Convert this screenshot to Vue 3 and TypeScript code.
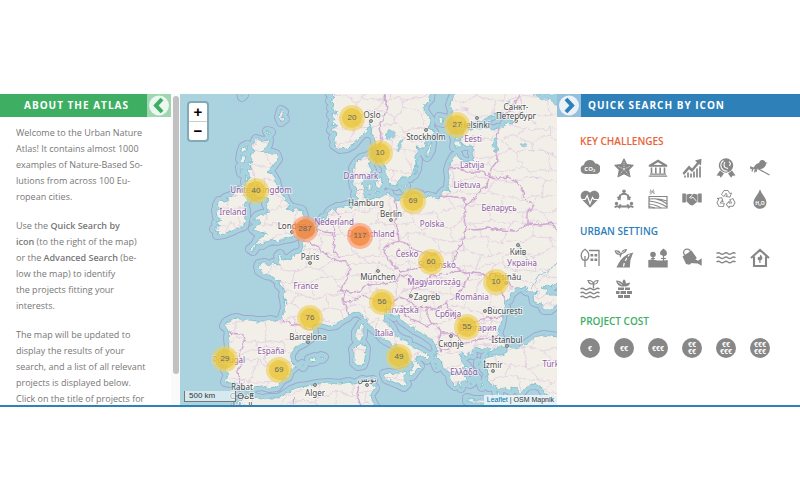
<script setup lang="ts">
interface Marker { n: number; x: number; y: number; hot?: boolean }
interface Label { t: string; x: number; y: number; city?: boolean }

const VIEW = { x: 180, y: 94, w: 377, h: 311 }

const markers: Marker[] = [
  { n: 20, x: 352, y: 118 }, { n: 27, x: 457, y: 125 }, { n: 10, x: 380, y: 153 },
  { n: 40, x: 256, y: 191 }, { n: 69, x: 413, y: 201 }, { n: 287, x: 305, y: 229, hot: true },
  { n: 117, x: 360, y: 236, hot: true }, { n: 60, x: 431, y: 262 }, { n: 10, x: 496, y: 282 },
  { n: 56, x: 382, y: 302 }, { n: 76, x: 310, y: 318 }, { n: 55, x: 467, y: 327 },
  { n: 29, x: 225, y: 359 }, { n: 69, x: 279, y: 370 }, { n: 49, x: 399, y: 357 },
]

const place = (m: Marker) => ({
  left: `${((m.x - VIEW.x) / VIEW.w) * 100}%`,
  top: `${((m.y - VIEW.y) / VIEW.h) * 100}%`,
})

const labels: Label[] = [
  { t: 'Danmark', x: 361, y: 179 }, { t: 'Eesti', x: 473, y: 142 }, { t: 'Latvija', x: 472, y: 168 },
  { t: 'Lietuva', x: 467, y: 188 }, { t: 'Беларусь', x: 499, y: 211 }, { t: 'Nederland', x: 334, y: 225 },
  { t: 'Deutschland', x: 371, y: 237 }, { t: 'Polska', x: 432, y: 227 }, { t: 'Ireland', x: 233, y: 215 },
  { t: 'United Kingdom', x: 261, y: 193 }, { t: 'France', x: 306, y: 289 }, { t: 'Česko', x: 407, y: 257 },
  { t: 'Slovensko', x: 437, y: 268 }, { t: 'Magyarország', x: 434, y: 285 }, { t: 'Hrvatska', x: 402, y: 313 },
  { t: 'Italia', x: 384, y: 336 }, { t: 'España', x: 271, y: 354 }, { t: 'Portugal', x: 229, y: 363 },
  { t: 'România', x: 472, y: 300 }, { t: 'Србија', x: 448, y: 317 }, { t: 'България', x: 478, y: 331 },
  { t: 'Ελλάδα', x: 464, y: 375 }, { t: 'Україна', x: 522, y: 266 }, { t: 'Türkiye', x: 556, y: 367 },
  { t: 'Oslo', x: 372, y: 118, city: true }, { t: 'Stockholm', x: 426, y: 140, city: true },
  { t: 'Helsinki', x: 475, y: 128, city: true }, { t: 'Санкт-', x: 516, y: 110, city: true },
  { t: 'Петербург', x: 516, y: 119, city: true }, { t: 'Hamburg', x: 366, y: 206, city: true },
  { t: 'Berlin', x: 391, y: 217, city: true }, { t: 'London', x: 292, y: 229, city: true },
  { t: 'Paris', x: 310, y: 260, city: true }, { t: 'München', x: 378, y: 280, city: true },
  { t: 'Zagreb', x: 427, y: 300, city: true }, { t: 'Barcelona', x: 308, y: 340, city: true },
  { t: 'Rabat', x: 242, y: 390, city: true }, { t: 'ⵔⴱⴰⵟ', x: 242, y: 399, city: true },
  { t: 'الرباط', x: 242, y: 408, city: true }, { t: 'Alger', x: 315, y: 396, city: true },
  { t: 'تونس', x: 367, y: 382, city: true }, { t: 'București', x: 505, y: 314, city: true },
  { t: 'Скопје', x: 451, y: 347, city: true }, { t: 'İstanbul', x: 507, y: 343, city: true },
  { t: 'İzmir', x: 493, y: 368, city: true }, { t: 'Київ', x: 518, y: 255, city: true },
  { t: 'Chișinău', x: 505, y: 280, city: true },
]

const dots: number[][] = [
  [371, 121], [426, 130], [477, 118], [516, 121], [391, 220], [292, 232], [310, 263], [378, 271],
  [411, 296], [308, 342], [315, 385], [367, 385], [485, 311], [451, 336], [507, 346], [493, 371], [518, 245], [506, 283],
]

const mainland =
  'M456 85L455 94 452 99 450 105 452 111 451 117 456 124 460 128 464 125 467 127 470 123 477 122 484 120 490 117 497 114 503 114 506 118 513 120 511 124 505 123 503 128 498 128 493 130 487 127 480 129 473 128 467 130 462 132 463 136 460 139 462 144 466 146 470 145 473 147 472 153 474 158 470 162 465 162 460 159 458 154 454 156 450 163 448 170 449 178 448 187 450 192 444 191 441 194 439 199 432 197 428 196 425 199 421 195 415 193 408 197 401 199 396 200 391 197 389 193 384 195 379 198 374 197 370 200 365 197 363 192 365 188 361 185 364 180 364 175 370 175 372 170 369 166 371 162 369 158 374 152 368 156 361 158 356 163 353 168 354 174 353 181 354 187 357 190 355 195 358 199 356 202 359 207 353 204 350 208 347 205 341 207 337 207 335 212 333 209 329 212 325 220 323 218 320 225 316 227 318 230 313 233 307 237 303 241 304 247 301 252 295 254 291 257 293 260 287 259 283 260 280 254 278 256 280 265 273 263 270 266 265 263 259 264 258 267 261 269 259 271 266 275 272 276 277 280 281 281 279 285 284 290 283 296 288 303 284 299 285 308 282 318 278 322 271 320 265 321 257 321 250 320 243 320 237 318 232 319 226 322 224 326 229 330 228 338 229 347 227 355 224 360 227 365 225 370 228 374 225 382 230 383 235 383 240 386 245 390 249 392 255 387 262 386 269 388 277 387 282 380 288 377 290 371 296 366 291 361 291 354 296 347 304 343 312 337 314 332 312 327 316 323 322 324 329 326 336 325 342 320 348 317 350 314 357 312 363 315 367 321 371 327 377 332 383 339 390 343 396 346 400 350 405 353 409 358 414 364 411 369 409 376 412 376 417 369 420 366 415 361 417 356 424 357 427 360 429 356 422 351 414 347 407 345 408 341 401 339 395 334 392 327 384 320 385 314 384 309 389 308 390 314 394 317 398 314 402 321 408 325 415 330 423 334 430 339 434 342 437 350 436 356 440 360 443 367 447 372 455 371 461 373 456 374 450 375 451 382 455 386 458 382 461 388 463 380 467 383 465 376 461 371 466 373 463 368 466 367 462 361 459 354 463 351 464 357 468 355 468 352 473 355 471 350 475 347 481 349 488 347 492 349 487 355 491 353 494 350 500 346 507 348 507 353 500 355 493 355 485 357 485 363 489 368 485 369 488 374 486 379 491 384 489 387 497 385 498 389 505 388 511 391 511 387 517 389 521 393 526 387 533 384 541 387 545 394 551 397 558 396 600 398L600 85Z' +
  'M507 346L501 340 498 333 501 325 502 319 503 312 506 307 504 302 509 300 511 294 517 289 524 286 529 288 526 291 533 293 537 292 533 297 534 302 541 304 544 310 550 310 555 306 560 305 590 300 590 341 558 337 551 336 543 335 536 337 529 342 522 346 514 348Z' +
  'M546 295L548 290 542 288 547 285 552 287 557 282 590 279 590 295 555 295Z'

const islands = [
  'M329 85L330 94 334 98 330 101 335 106 331 108 337 113 331 115 335 120 332 124 338 126 331 130 337 133 333 138 336 142 334 145 340 149 347 148 353 145 359 138 364 132 367 133 369 127 370 121 371 127 370 133 374 136 375 142 377 150 380 155 381 162 386 167 386 174 389 178 388 184 396 186 398 181 402 178 410 178 413 171 416 164 415 156 419 151 416 147 423 148 426 143 425 139 430 137 434 132 430 128 425 130 430 125 431 120 427 115 424 110 425 104 430 99 432 85Z',
  'M256 139L263 141 269 140 268 145 262 151 269 152 276 154 278 159 273 166 270 170 266 172 272 174 276 181 278 189 284 196 287 203 290 206 287 209 292 211 294 208 302 210 304 216 301 222 296 225 300 228 302 231 296 236 291 238 284 239 277 241 272 240 267 242 262 245 258 244 253 251 250 249 255 245 258 239 263 235 268 234 265 232 258 233 253 229 259 225 260 220 254 220 257 216 262 214 268 214 268 208 266 204 268 199 264 196 260 198 254 196 257 191 259 185 255 187 252 182 255 179 250 184 248 190 246 185 250 176 247 171 252 168 248 164 253 161 250 155 255 152 252 147Z',
  'M231 196L236 192 241 190 245 194 247 200 244 205 246 210 246 217 244 226 238 228 232 231 224 234 217 235 219 231 214 229 220 226 216 223 222 220 217 217 216 210 222 209 217 205 219 201 226 202 229 199 225 198Z',
  'M243 147L247 145 245 151 241 153ZM241 155L246 157 244 163 240 159ZM240 167L244 169 241 173ZM246 176L248 179 245 182ZM267 131L271 132 269 135ZM281 110L284 112 282 116 285 119 281 122 279 117ZM241 92L244 95 242 97Z',
  'M367 184L371 184 371 190 367 190ZM375 181L381 177 383 183 380 189 376 187ZM375 191L380 192 376 194ZM402 185L406 186 405 189ZM428 146L432 143 431 150 427 157 425 154ZM418 160L417 169 414 175ZM439 117L444 118 443 123 439 122ZM455 142L461 142 461 147 454 147ZM454 137L458 138 456 141Z',
  'M361 324L363 326 363 335 360 342 356 339 356 332ZM357 345L363 343 366 348 365 359 363 365 358 366 354 363 354 355 353 349Z',
  'M384 374L389 373 396 374 406 371 404 379 407 384 404 387 398 384 391 381 386 379ZM309 359L315 357 316 361 311 362ZM321 356L324 357 322 359ZM302 364L304 365 303 367Z',
  'M467 398L474 400 484 400 485 403 475 403 467 401ZM463 363L467 366 470 371 466 370ZM475 376L477 378 475 380ZM483 365L487 367 484 369ZM478 362L480 363 478 365ZM481 384L484 385 482 387ZM435 363L438 365 437 368ZM496 390L499 394 497 397ZM470 381L472 383 470 384ZM434 354L436 357 434 359Z',
  'M230 415L236 406 242 400 247 394 254 397 262 399 270 398 278 398 284 395 291 390 299 387 308 386 317 384 328 383 340 384 349 382 355 384 362 380 367 381 373 380 371 385 375 388 370 395 372 401 377 410Z',
]
const land = mainland + islands.join('')

const countryBorders =
  'M378 148L382 138 379 128 383 118 388 108 384 98 386 90M354 190L363 190M228 333L240 334 246 338 242 345 240 354 242 363 237 372 240 383M282 320L292 324 300 325 309 330 314 329M348 316L346 308 343 300 346 291 340 291 347 279 350 270 347 262 339 261 331 258 322 251 312 243 304 240M317 229L325 232 332 233 335 241 333 249 340 258M336 210L340 217 334 225 335 236M346 291L352 292 360 291 366 286 374 284 382 284 390 282 397 281 401 272 395 267 388 259 383 250 389 244 399 241 407 244 413 249 421 253 430 253 438 255M401 272L409 270 416 268 423 265 427 258M399 241L398 230 395 221 397 210 395 199M346 291L342 300 351 302 357 299 365 296 373 300 384 301 392 303 398 297 407 299 413 289 414 280 407 275 401 276M413 289L423 285 430 276 440 275 450 272 461 271M407 299L416 308 427 307 437 310 446 302 455 298 464 286 470 273 461 271 453 263 457 251 463 240 466 229 464 217 466 205 464 198 448 196 437 198M448 169L458 168 469 172 482 172 489 177 491 169 498 160 495 151 497 138 499 128M489 177L487 186 478 192 475 199 466 205M489 177L501 178 508 177 517 182 522 190 526 199 533 205 527 213 527 224 515 231 501 230 487 228 477 230 466 229M527 224L541 225 552 223 557 230M470 273L484 274 490 272 500 276 507 280 513 288M484 274L494 284 501 291 505 301M446 302L449 309 456 316 463 321 475 322 487 318 503 317M463 321L460 330 457 336 463 344 475 340 487 338 492 341 498 335M403 305L403 313 411 319 421 322 427 328 432 323 438 325 441 333 438 343 441 351M427 307L427 315 431 323M441 333L450 333 457 336M441 351L449 348 463 344M294 398L291 410M360 383L357 394 361 407M505 115L515 103 522 92'

/* Repeatable noise, so that the district web is drawn the same on each load. */
const noise = (a: number, b: number) => {
  const s = Math.sin(a * 127.1 + b * 311.7) * 43758.5453
  return s - Math.floor(s) - 0.5
}

/* A jittered honeycomb of district lines, clipped to the land. */
function districtWeb(step: number): string {
  const point = (i: number, j: number): [number, number] => [
    170 + i * step + noise(i, j) * step * 0.8,
    84 + j * step + noise(j + 50, i + 9) * step * 0.8,
  ]
  const link = (a: [number, number], b: [number, number], k: number) => {
    const mx = (a[0] + b[0]) / 2 + noise(k, a[0]) * 4
    const my = (a[1] + b[1]) / 2 + noise(a[1], k) * 4
    return `M${a[0].toFixed(1)} ${a[1].toFixed(1)}L${mx.toFixed(1)} ${my.toFixed(1)} ${b[0].toFixed(1)} ${b[1].toFixed(1)}`
  }
  let d = ''
  for (let i = 0; i * step < 400; i++) {
    for (let j = 0; j * step < 330; j++) {
      d += link(point(i, j), point(i + 1, j), i + j)
      if ((i + j) % 2 === 0) d += link(point(i, j), point(i, j + 1), i - j)
    }
  }
  return d
}
const web = districtWeb(14)

interface Icon { name: string; svg: string }
const recycleArrow = 'M5.500 5.500L8 1.500h4l2 3.200 1.500-.8-1.500 4.300-4.300-.9L11.300 6.400 10 4.200 8 7.600z'
const challenges: Icon[] = [
  { name: 'Climate action', svg: '<path d="M5 16a4.700 4.700 0 0 1-1-9.200 6 6 0 0 1 11.300-1.300A5.200 5.200 0 0 1 15.500 16z"/><text x="9.800" y="13" font-size="6" font-weight="700" fill="#fff" text-anchor="middle">CO₂</text>' },
  { name: 'Coastal resilience', svg: '<path d="M10 .8l2.800 5.700 6.600.8-4.700 4.600 1.400 7L10 15.800 3.900 18.900l1.400-7L.6 7.300l6.600-.8z" stroke="currentColor" stroke-width="1" stroke-linejoin="round"/><path d="M10 4v7M10 11L4 8.500M10 11l6-2.500M10 11l-4 5.500M10 11l4 5.500" stroke="#fff" stroke-width=".7" stroke-dasharray="1 1"/>' },
  { name: 'Cultural heritage', svg: '<path d="M10 1.500L.8 7v1.700h18.400V7zM10 4.200L14.500 7h-9z" fill-rule="evenodd"/><path d="M3.500 9.500v6M7.800 9.500v6M12.200 9.500v6M16.500 9.500v6" stroke="currentColor" stroke-width="1.600"/><path d="M2 15.500h16v1.300H2zM.8 17.500h18.400v1.300H.8z"/>' },
  { name: 'Economic development', svg: '<path d="M.5 15l6.500-7.500 3 3 5-6-2-2L19.500.8 19 7.500l-2-1.500-7 8-3-2.800L2 17z"/><path d="M3 17.500v2M6 14.500v5M9 15.500v4M12 13.500v6M15 10.500v9M18 8.500v11" stroke="currentColor" stroke-width="1.700"/>' },
  { name: 'Environmental quality', svg: '<circle cx="10" cy="7.500" r="7.200"/><path d="M7.500 2.500q-4 3-2 7.500 2 3.500 6 3M9 4q-2 3 0 5.500l3 1M13 3.500l1.500 2-1 2.500" stroke="#fff" stroke-width="1.100" fill="none"/><path d="M4 12.500L.5 17.500l3 .2 1.300 2L8 15.500zM16 12.500l3.500 5-3 .2-1.300 2L12 15.500z"/>' },
  { name: 'Biodiversity', svg: '<path d="M18 5l-2.500-.8Q14.500 1.500 11.500 2q-2 .5-2.500 3-5 1-5.500 6.500l4-1q4 2 7.500-2 1.300-1.500 1-3z"/><path d="M.5 9.500l8 1.500L19.500 17M3 10L2 13.500M6 10.500l-1.500 4" fill="none" stroke="currentColor" stroke-width="1.200"/><path d="M0 8l4 2-3.500 1.500zM4 12.500l3-1.500v3z"/>' },
  { name: 'Health and well-being', svg: '<path d="M10 18.800L2 10.500C-2 5.500 4-1.500 10 3.700 16-1.500 22 5.500 18 10.500z"/><path d="M.5 10.500h4.700l2-3.700 2.800 7.700 2.500-6 1.500 2h5.500" fill="none" stroke="#fff" stroke-width="1.200"/>' },
  { name: 'Inclusive communities', svg: '<circle cx="10" cy="2.300" r="1.800"/><circle cx="2.500" cy="14.500" r="1.700"/><circle cx="17.500" cy="14.500" r="1.700"/><path d="M7 5.800q3-2 6 0M6.500 5.500L4.200 11M13.500 5.500L15.800 11M6.500 17.500h7M.8 18.500q2-2.500 4.700-.2l1-3M19.200 18.500q-2-2.500-4.700-.2l-1-3" fill="none" stroke="currentColor" stroke-width="1.900"/><path d="M2.500 8l4 3.500.5-4.500zM17.500 8l-4 3.500-.5-4.500z"/>' },
  { name: 'Green space', svg: '<path d="M1 7.500h18v11.500H1z" fill="none" stroke="currentColor" stroke-width="1.200"/><path d="M1 10q9-1 18 2M1 12q10 1 18 6M1 15q8 1 12 4M8 10q6 1 11 5M1 17.500l6 1.500" fill="none" stroke="currentColor" stroke-width="1.200"/><path d="M2 .8l1.500 1.200M5.500.5l-1 2M3.500 4L2 5.500M5 3.500L6.500 5M1.500 3h5" stroke="currentColor" stroke-width="1"/>' },
  { name: 'Participatory planning', svg: '<path d="M.3 4.500h3.600v9H.3zM16.100 4.500h3.600v9h-3.600zM4.400 5.500l4-.8 1.600.8 2-.8 3.600.8v7l-5 4-2.600-.8-3.600-3.500z"/><path d="M10.500 6L7.500 8.500q1.500 1.500 3.500-.3l3.500 4" fill="none" stroke="#fff" stroke-width=".9"/>' },
  { name: 'Sustainable production', svg: `<g fill="none" stroke="currentColor" stroke-width=".9" stroke-linejoin="round"><path d="${recycleArrow}"/><path d="${recycleArrow}" transform="rotate(120 10 10.800)"/><path d="${recycleArrow}" transform="rotate(240 10 10.800)"/></g>` },
  { name: 'Water management', svg: '<path d="M10 .3q1.300 3.700 4.200 7.500c5.600 8-.4 12-4.200 12s-9.800-4-4.200-12Q8.700 4 10 .3z"/><text x="10" y="15.500" font-size="5" font-weight="700" fill="#fff" text-anchor="middle">H₂O</text>' },
]
const wave = 'q2-1.500 3.800 0t3.800 0 3.800 0 3.800 0 3.800 0'
const settings: Icon[] = [
  { name: 'Building areas', svg: '<path d="M5 1.200q4.300 2.800 3.700 7.200-.5 4-3.700 4T1.300 8.400Q.7 4 5 1.200z" fill="none" stroke="currentColor" stroke-width="1.300"/><path d="M5 8v11M9 2.500h10V18" fill="none" stroke="currentColor" stroke-width="1.300"/><path d="M10.500 6h2.700v2.500h-2.700zM14.500 6h2.700v2.500h-2.700zM10.500 10.500h2.700V13h-2.700zM14.500 10.500h2.700V13h-2.700z"/>' },
  { name: 'Green street', svg: '<path d="M2.500 19.500Q6 10.500 14 6l5.500-1.500Q15.500 11 16 19.500z"/><path d="M9.500 18.500l.8-3.500M11.300 13l1.500-3M14 8.500l1.500-2" stroke="#fff" stroke-width="1.200"/><path d="M.5 2.500q5-1 6.500 3l1.500-3q2-2 4.500-1.500Q12.500 5 8 6l-2 4-.5-3Q1.500 7 .5 2.500z"/><path d="M2 3.500l4 2.500M8 5l3-2.500" stroke="#fff" stroke-width=".7"/>' },
  { name: 'Parks', svg: '<path d="M.3 12q3-1 7 0t12.400 0v7.500H.3z"/><circle cx="5" cy="6.500" r="2.800"/><path d="M15.500.5q4.500 3 3.200 6t-6.400 0Q11 3.500 15.500.5z"/><path d="M5 7v6M15.500 7v6" stroke="currentColor" stroke-width="1.300"/><path d="M3 10h4v1H3zM13 10h5v1h-5z"/>' },
  { name: 'Allotments', svg: '<circle cx="5" cy="4.500" r="3.400" fill="none" stroke="currentColor" stroke-width="1.300"/><path d="M.5 8.500L9.500 2.500l5.300 7.500-7.300 6.800-3.500-.8z"/><path d="M10 9.500l6 3.300 3.700-2.500v7.400l-4-2.200L8 15z"/>' },
  { name: 'Rivers and lakes', svg: `<path d="M.5 5.500${wave}M.5 9.800${wave}M.5 14${wave}" fill="none" stroke="currentColor" stroke-width="1.400"/>` },
  { name: 'Indoor green', svg: '<path d="M1 10L10 2l9 8M4 8.500v9.500h12V8.500" fill="none" stroke="currentColor" stroke-width="2.100"/><path d="M10.300 6.500q3 2.500 1.700 5l-1.500 1v2.500H9.300v-2.500q-2.500-1-1.300-3.500l1.500.3z"/>' },
  { name: 'Blue and green corridors', svg: `<path d="M.5 10${wave}M.5 14${wave}M.5 18${wave}M13.500 9.500V4" fill="none" stroke="currentColor" stroke-width="1.400"/><path d="M8 1.500q4.500-.5 5.500 3.500Q9 5.500 8 1.500zM13.500 5q0-3.500 4.500-3.500-.5 4-4.500 3.500z" fill="none" stroke="currentColor" stroke-width="1.100"/>` },
  { name: 'Green walls', svg: '<path d="M4 8.500h6V11H4zM11 8.500h5V11h-5zM2 12h3.500v3H2zM6.500 12h5.500v3H6.500zM13 12h5v3h-5zM4 16h5v3H4zM10 16h6v3h-6z"/><path d="M2 1.500q5 0 6.500 3Q8 1.500 10 .3q2.500 2 2 4.200l4-1q0 3.500-4.500 4H8Q3 7 2 1.500z"/><path d="M4 3l4 3" stroke="#fff" stroke-width=".7"/>' },
]
const costs: string[][] = [['€'], ['€€'], ['€€€'], ['€€', '€€'], ['€€', '€€€'], ['€€€', '€€€']]
const sections = [
  { title: 'KEY CHALLENGES', tone: 'orange', icons: challenges },
  { title: 'URBAN SETTING', tone: 'blue', icons: settings },
]
</script>

<template>
  <div class="page">
    <main class="atlas">
      <section class="about">
        <div class="about-body">
          <header class="bar bar-green">
            <h2>ABOUT THE ATLAS</h2>
            <button class="toggle" aria-label="Hide the about panel">
              <svg viewBox="0 0 24 23"><circle cx="12" cy="11.500" r="10" /><path d="M15 5L9 11.500 15 18" /></svg>
            </button>
          </header>
          <div class="copy">
            <p>Welcome to the Urban Nature<br>Atlas! It contains almost 1000<br>examples of Nature-Based So-<br>lutions from across 100 Eu-<br>ropean cities.</p>
            <p>Use the <b>Quick Search by<br>icon</b> (to the right of the map)<br>or the <b>Advanced Search</b> (be-<br>low the map) to identify<br>the projects fitting your<br>interests.</p>
            <p>The map will be updated to<br>display the results of your<br>search, and a list of all relevant<br>projects is displayed below.<br>Click on the title of projects for</p>
          </div>
        </div>
        <div class="track"><div class="thumb"></div></div>
      </section>

      <section class="map" aria-label="Map of projects">
        <svg class="world" :viewBox="`${VIEW.x} ${VIEW.y} ${VIEW.w} ${VIEW.h}`" preserveAspectRatio="xMidYMid slice">
          <defs>
            <clipPath id="land-clip"><path :d="land" clip-rule="evenodd" /></clipPath>
            <filter id="coast-detail" filterUnits="userSpaceOnUse" x="160" y="74" width="420" height="350">
              <feTurbulence type="fractalNoise" baseFrequency="0.2" numOctaves="2" seed="4" />
              <feDisplacementMap in="SourceGraphic" scale="5" xChannelSelector="R" yChannelSelector="G" />
            </filter>
          </defs>
          <rect x="0" y="0" width="900" height="600" class="sea" />
          <path :d="land" class="limit" />
          <path :d="land" class="shelf" />
          <g filter="url(#coast-detail)">
            <path :d="land" class="land" fill-rule="evenodd" />
            <g clip-path="url(#land-clip)">
              <path :d="web" class="web" />
              <path :d="countryBorders" class="border" />
            </g>
            <path class="lake" d="M386 134L390 129 394 131 395 136 390 140 387 138ZM397 145L403 139 402 145 398 152ZM494 137L498 139 496 144 499 150 496 152 493 146ZM521 144L525 143 527 146 523 147ZM534 94L542 100 550 98 553 104 558 106 558 94ZM507 104L509 100 510 105Z" />
            <path class="river" d="M557 263L548 271 540 274 531 288M519 245L522 254 530 261M488 311L500 309" />
          </g>
          <g class="place-dots">
            <circle v-for="(d, i) in dots" :key="i" :cx="d[0]" :cy="d[1]" r="1.500" />
          </g>
          <text v-for="l in labels" :key="l.t" :x="l.x" :y="l.y" :class="l.city ? 'city' : 'country'">{{ l.t }}</text>
        </svg>
        <button v-for="(m, i) in markers" :key="i" class="marker" :class="{ hot: m.hot }" :style="place(m)"><span>{{ m.n }}</span></button>
        <div class="zoom">
          <button aria-label="Zoom in">+</button>
          <button aria-label="Zoom out">−</button>
        </div>
        <div class="scale">500 km</div>
        <div class="credit"><a href="#">Leaflet</a> | OSM Mapnik</div>
      </section>

      <section class="search">
        <header class="bar bar-blue">
          <button class="toggle" aria-label="Hide the search panel">
            <svg viewBox="0 0 24 23"><circle cx="12" cy="11.500" r="10" /><path d="M9 5L15 11.500 9 18" /></svg>
          </button>
          <h2>QUICK SEARCH BY ICON</h2>
        </header>
        <div class="groups">
          <div v-for="s in sections" :key="s.title" class="group">
            <h3 :class="s.tone">{{ s.title }}</h3>
            <div class="icons">
              <button v-for="ic in s.icons" :key="ic.name" :aria-label="ic.name">
                <svg viewBox="0 0 20 20" v-html="ic.svg"></svg>
              </button>
            </div>
          </div>
          <div class="group">
            <h3 class="green">PROJECT COST</h3>
            <div class="icons">
              <button v-for="(c, i) in costs" :key="i" class="cost">
                <span v-for="(row, r) in c" :key="r">{{ row }}</span>
              </button>
            </div>
          </div>
        </div>
      </section>
    </main>
  </div>
</template>

<style>
body { background: #fff; }
</style>

<style scoped>
.page {
  box-sizing: border-box;
  height: 100vh;
  padding: 94px 0 93px;
  font-family: "Open Sans", "Noto Sans", sans-serif;
  color: #777;
}
.atlas {
  box-sizing: border-box;
  height: 100%;
  display: grid;
  grid-template-columns: 180px minmax(0, 1fr) 243px;
  grid-template-rows: minmax(0, 1fr);
  border-bottom: 2px solid #2e80b9;
}
button { padding: 0; margin: 0; border: 0; background: none; font: inherit; color: inherit; cursor: pointer; }
h2, h3, p { margin: 0; }

.about { display: flex; min-height: 0; overflow: hidden; }
.about-body { flex: 1; overflow: hidden; }
.track { width: 9px; box-sizing: border-box; padding: 2px 2px 0; background: #fafafa; }
.thumb { width: 6px; height: 90%; border-radius: 3px; background: #c1c1c1; }

.bar { display: flex; height: 23px; align-items: center; color: #fff; }
.bar h2 { font-size: 10px; line-height: 23px; font-weight: 700; letter-spacing: 1px; }
.bar-green { background: #3dae62; }
.bar-green h2 { flex: 1; padding-left: 6px; text-align: center; }
.bar-blue { background: #2e80b9; }
.bar-blue h2 { padding-left: 7px; }
.toggle { width: 24px; height: 23px; flex: none; }
.toggle svg { display: block; width: 24px; height: 23px; }
.toggle circle { fill: #fff; fill-opacity: .8; }
.toggle path { fill: none; stroke-width: 4; }
.bar-green .toggle { background: #9ed6b0; }
.bar-green .toggle path { stroke: #3dae62; }
.bar-blue .toggle { background: #96bfdc; }
.bar-blue .toggle path { stroke: #2e80b9; }

.copy { display: flex; flex-direction: column; gap: 13px; padding: 8px 0 0 16px; font-size: 9px; line-height: 16px; white-space: nowrap; }
.copy b { font-weight: 600; }

.map { position: relative; overflow: hidden; background: #aad3df; }
.world { display: block; width: 100%; height: 100%; }
.sea { fill: #aad3df; }
.limit { fill: none; stroke: #a0a8d0; stroke-width: 10; stroke-linejoin: round; }
.shelf { fill: none; stroke: #a8d2de; stroke-width: 8; stroke-linejoin: round; }
.land { fill: #f2efe9; stroke: #86c3d3; stroke-width: 1; }
.web { fill: none; stroke: #dfc6df; stroke-width: .7; }
.border { fill: none; stroke: #cfa6d2; stroke-width: 1.3; stroke-linejoin: round; }
.lake { fill: #9fd0df; stroke: #7dbfd0; stroke-width: .5; }
.river { fill: none; stroke: #8fc8d9; stroke-width: 1; }
.place-dots circle { fill: #bbb; stroke: #777; stroke-width: 1; }
.world text {
  font-family: "Noto Sans", "DejaVu Sans", sans-serif;
  font-size: 8px;
  text-anchor: middle;
  paint-order: stroke;
  stroke: #fff;
  stroke-opacity: .6;
  stroke-width: 2;
  stroke-linejoin: round;
}
.country { fill: #8e5aa0; }
.city { fill: #4a4a4a; }

.marker {
  position: absolute;
  width: 26px;
  height: 26px;
  padding: 3px;
  border-radius: 50%;
  transform: translate(-50%, -50%);
  background: rgba(238, 208, 90, .65);
}
.marker span {
  display: block;
  border-radius: 50%;
  background: rgba(234, 194, 40, .6);
  font: 8px/20px "Liberation Sans", Arial, sans-serif;
  color: #666;
  text-align: center;
}
.marker.hot { background: rgba(253, 156, 115, .7); }
.marker.hot span { background: rgba(241, 128, 40, .65); }

.zoom {
  position: absolute;
  top: 7px;
  left: 7px;
  display: flex;
  flex-direction: column;
  border: 2px solid rgba(70, 110, 120, .4);
  border-radius: 4px;
  background: #fff;
  background-clip: padding-box;
}
.zoom button { width: 18px; height: 18px; font: bold 15px/18px "Liberation Sans", Arial, sans-serif; color: #000; }
.zoom button + button { border-top: 1px solid #ccc; height: 19px; }
.scale {
  position: absolute;
  left: 4px;
  bottom: 3px;
  box-sizing: border-box;
  width: 52px;
  height: 11px;
  padding-left: 4px;
  border: 1px solid #777;
  border-top: 0;
  background: rgba(255, 255, 255, .5);
  font: 8px/10px "Liberation Sans", Arial, sans-serif;
  color: #333;
}
.credit {
  position: absolute;
  right: 0;
  bottom: 0;
  padding: 0 3px;
  background: rgba(255, 255, 255, .7);
  font: 7px/10px "Liberation Sans", Arial, sans-serif;
  color: #333;
}
.credit a { color: #0078a8; text-decoration: none; }

.groups { display: flex; flex-direction: column; gap: 15px; padding: 17px 0 0 23px; }
.group { display: flex; flex-direction: column; gap: 10px; }
.group h3 { font-size: 10px; line-height: 14px; font-weight: 600; }
.orange { color: #ea6236; }
.blue { color: #2e80b9; }
.green { color: #3dae62; }
.icons { display: grid; grid-template-columns: repeat(6, 20px); gap: 11px 14px; color: #878787; }
.icons button { width: 20px; height: 20px; }
.icons svg { display: block; width: 20px; height: 20px; fill: currentColor; }
.icons .cost {
  display: flex;
  flex-direction: column;
  justify-content: center;
  align-items: center;
  border-radius: 50%;
  background: #878787;
  color: #fff;
  font-size: 7px;
  font-weight: 700;
  line-height: 7px;
}
</style>
